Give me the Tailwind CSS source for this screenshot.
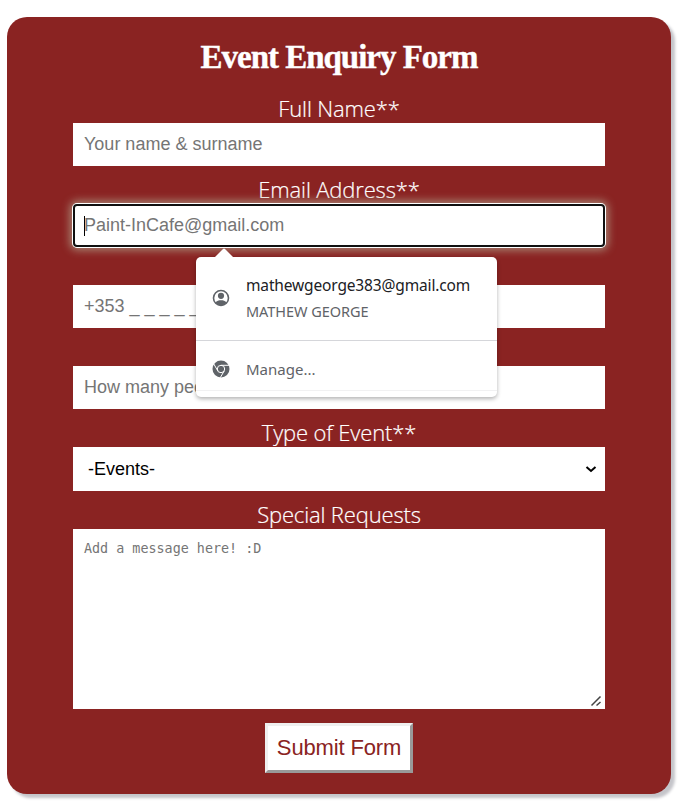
<!DOCTYPE html>
<html lang="en">
<head>
<meta charset="utf-8">
<title>Event Enquiry Form</title>
<script src="https://cdn.jsdelivr.net/npm/@tailwindcss/browser@4"></script>
</head>
<body class="bg-white h-[807px] overflow-hidden pt-[17px] pl-[7px] font-['Liberation_Sans',sans-serif]">
<form class="relative w-[664px] h-[777px] rounded-[20px] bg-[#8a2322] shadow-[4px_4px_3px_#c5c5ca] px-[66px] flex flex-col items-center">
  <h1 class="h-[76px] pt-[20px] text-[33px] leading-[40px] tracking-[-1.020px] font-bold text-white whitespace-nowrap font-['Liberation_Serif',serif] [-webkit-text-stroke:0.4px_#fff]">Event Enquiry Form</h1>

  <label class="h-[30px] leading-[31px] text-[22px] tracking-[-0.150px] font-light text-white font-['Open_Sans',sans-serif] whitespace-nowrap [-webkit-text-stroke:0.2px_#fff]">Full Name**</label>
  <div class="w-full h-[43px] bg-white px-[11px] leading-[42px] text-[18px] text-[#757575]">Your name &amp; surname</div>

  <label class="h-[38px] leading-[47px] text-[22px] tracking-[-0.150px] font-light text-white font-['Open_Sans',sans-serif] whitespace-nowrap [-webkit-text-stroke:0.2px_#fff]">Email Address**</label>
  <div class="w-full h-[43px] bg-white rounded-[4px] outline-2 -outline-offset-2 outline-[#101010] shadow-[0_0_0_1px_#fff,0_0_9px_3px_#a98a78] px-[11px] flex items-center text-[18px] text-[#757575]">
    <span class="w-px h-[20px] bg-black -mr-px mt-px"></span><span class="leading-[42px] -mt-px">Paint-InCafe@gmail.com</span>
  </div>

  <div class="w-full h-[43px] mt-[38px] bg-white px-[11px] leading-[42px] text-[18px] text-[#757575]">+353 _ _ _ _ _ _ _</div>
  <div class="w-full h-[43px] mt-[38px] bg-white px-[11px] leading-[42px] text-[18px] text-[#757575]">How many people?</div>

  <label class="h-[38px] leading-[47px] text-[22px] tracking-[-0.150px] font-light text-white font-['Open_Sans',sans-serif] whitespace-nowrap [-webkit-text-stroke:0.2px_#fff]">Type of Event**</label>
  <div class="w-full h-[44px] bg-white pl-[15px] pr-[8px] flex items-center justify-between text-[18px] text-black">
    <span>-Events-</span>
    <svg width="12" height="8" viewBox="0 0 12 8" fill="none" stroke="#000" stroke-width="2"><path d="M1.500 2 6 6l4.500-4"/></svg>
  </div>

  <label class="h-[38px] leading-[47px] text-[22px] tracking-[-0.150px] font-light text-white font-['Open_Sans',sans-serif] whitespace-nowrap [-webkit-text-stroke:0.2px_#fff]">Special Requests</label>
  <div class="w-full h-[180px] shrink-0 bg-white pl-[11px] pt-[12px] pr-[3px] pb-[2px] flex justify-between text-[13.400px] leading-[16px] text-[#757575] font-['DejaVu_Sans_Mono',monospace]">
    <span>Add a message here! :D</span>
    <svg class="self-end" width="12" height="12" viewBox="0 0 12 12" fill="none" stroke="#444" stroke-width="1.500"><path d="M1.500 10.500 10.500 1.500M6.500 10.500 10.500 7"/></svg>
  </div>

  <button type="button" class="mt-[14px] w-[148px] h-[50px] shrink-0 bg-white border-[3px] border-t-[#efefef] border-l-[#efefef] border-r-[#999] border-b-[#999] text-[22px] tracking-[-0.150px] leading-[44px] text-[#8a2322] whitespace-nowrap flex justify-center items-center">Submit Form</button>

  <div class="absolute left-[189px] top-[240px] w-[301px] h-[140px] bg-white rounded-[5px] shadow-[0_2px_4px_rgba(0,0,0,0.3)] font-['Noto_Sans',sans-serif]">
    <svg class="absolute -top-[9px] left-[18px]" width="20" height="10" viewBox="0 0 20 10"><path d="M0 10 9 1q1-1 2 0l9 9z" fill="#fff"/></svg>
    <div class="h-[83px] flex items-center pl-[16px] gap-[16px] pb-px">
      <svg width="18" height="18" viewBox="0 0 18 18" fill="none"><circle cx="9" cy="9" r="7.500" stroke="#5f6368" stroke-width="1.600"/><circle cx="9" cy="6.800" r="3.100" fill="#5f6368"/><path d="M3.300 13.500c1.500-1.800 3.500-2.300 5.700-2.300s4.200.5 5.700 2.300C13.300 15.500 11.300 16.500 9 16.500s-4.300-1-5.700-3z" fill="#5f6368"/></svg>
      <div class="whitespace-nowrap">
        <div class="text-[15.500px] leading-[26px] tracking-[-0.150px] text-[#202124]">mathewgeorge383@gmail.com</div>
        <div class="text-[14.500px] leading-[26px] tracking-[-0.050px] text-[#5f6368]">MATHEW GEORGE</div>
      </div>
    </div>
    <div class="h-[51px] border-t border-[#d5d6da] border-b border-b-[#f1f1f2] flex items-center pl-[16px] gap-[16px] pt-[6px]">
      <svg width="18" height="18" viewBox="0 0 18 18" fill="none"><circle cx="9" cy="9" r="8.500" fill="#5f6368"/><g stroke="#fff" stroke-width="1"><circle cx="9" cy="9" r="3.700"/><path d="M9 5.300H17M5.800 10.900 1.800 4M12.200 10.900 8.200 17.800"/></g></svg>
      <div class="text-[15px] text-[#5f6368] pt-px">Manage...</div>
    </div>
  </div>
</form>
</body>
</html>
